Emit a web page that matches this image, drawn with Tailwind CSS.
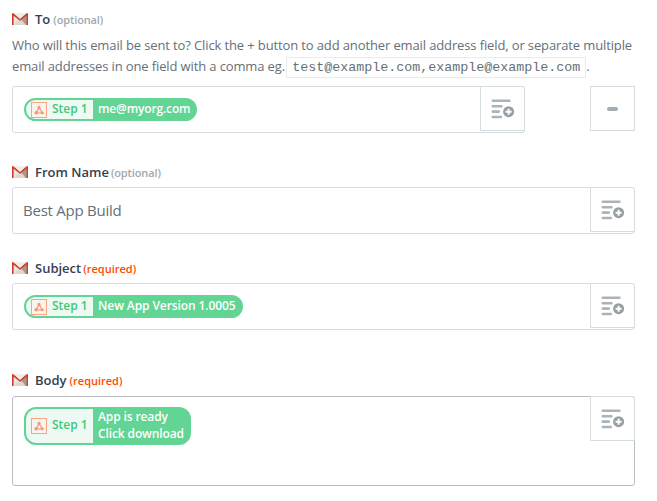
<!DOCTYPE html>
<html lang="en">
<head>
<meta charset="utf-8">
<title>Email action</title>
<script src="https://cdn.jsdelivr.net/npm/@tailwindcss/browser@4"></script>
</head>
<body class="bg-white font-['Open_Sans',sans-serif] text-[#666f78]">
<svg class="hidden">
  <symbol id="mail" viewBox="0 0 16 12">
    <rect x="0.5" y="0.5" width="15" height="11" fill="#e9e5d8"/>
    <path d="M8 7 14.5 1.5V12H12z" fill="#a39e94"/>
    <path d="M2 12 6.3 6.9 8 8l1.7-1.1 4 5.1z" fill="#dedacb"/>
    <path d="M2.5 .5h11L8 5.5z" fill="#f1eee5"/>
    <path d="M0 .7Q0 0 1 0L8 5.9 15 0q1 0 1 .7V12h-1.6V2.7L8 7.8 1.6 2.7V12H0z" fill="#cf3a30"/>
  </symbol>
  <symbol id="insert" viewBox="0 0 24 20">
    <g stroke="#aab3b8" stroke-width="2.6" stroke-linecap="round"><path d="M1.8 1.8h16.6M1.8 7.2h8.6M1.8 12.6h6M1.8 18h8"/></g>
    <circle cx="17.6" cy="12.7" r="5.5" fill="#959fa4"/>
    <path d="M17.6 9.7v6M14.6 12.7h6" stroke="#fff" stroke-width="1.9"/>
  </symbol>
  <symbol id="hook" viewBox="0 0 16 16">
    <rect x=".5" y=".5" width="15" height="15" fill="#f8f3ec" stroke="#f7a585"/>
    <g fill="none" stroke="#f79472" stroke-width="1.2"><path d="M8 5.2 5.6 10.4M8 5.2l2.6 4.6M5.2 11h6.2"/></g>
    <g fill="#f79472"><circle cx="8" cy="5.2" r="1.5"/><circle cx="5.1" cy="10.7" r="1.7"/><circle cx="11.2" cy="10.7" r="1.5"/></g>
  </symbol>
</svg>
<main class="flow-root h-[501px] w-[657px] overflow-hidden pl-3">
  <section class="mt-[9px] w-[623px]">
    <header class="flex h-5 items-center"><svg class="h-3 w-4"><use href="#mail"/></svg><h2 class="ml-[7px] text-[13px] leading-5 font-semibold text-[#354052]">To</h2><span class="ml-[3px] pt-px text-[11px] leading-5 font-semibold tracking-[-0.12px] text-[#a1a8ae]">(optional)</span></header>
    <p class="mt-[6px] w-[640px] text-[13px] leading-[21px] tracking-[-0.124px] whitespace-nowrap">Who will this email be sent to? Click the + button to add another email address field, or separate multiple<br>email addresses in one field with a comma eg. <code class="ml-[-2px] border border-[#e8eaeb] px-[5px] py-[2px] font-['Liberation_Mono',monospace] text-[13.33px] tracking-normal">test@example.com,example@example.com</code><span>.</span></p>
    <div class="mt-[8px] flex items-start justify-between">
      <div class="flex h-[47px] w-[513px] items-start justify-between rounded-[3px] border border-[#d5dce0] pl-[11px]">
        <div class="mt-[11px] flex rounded-[12px] border-2 border-[#62d493] bg-[#62d493] text-[12px] leading-[17px] font-semibold">
          <span class="flex w-[67px] items-center rounded-l-[10px] bg-[#eef9f4] pl-[5px] text-[#3fc878]"><svg class="mr-[5px] size-4"><use href="#hook"/></svg><span class="pb-[2px]">Step 1</span></span>
          <span class="px-[5px] pb-[2px] tracking-[-0.15px] text-white">me@myorg.com</span>
        </div>
        <button class="-mt-px -mr-px flex size-[45px] items-center justify-center rounded-tr-[3px] border border-[#d5dce0] bg-white"><svg class="h-5 w-6"><use href="#insert"/></svg></button>
      </div>
      <button class="flex size-[45px] items-center justify-center border border-[#d5dce0]"><span class="h-1 w-[11px] rounded-full bg-[#a4adb1]"></span></button>
    </div>
  </section>
  <section class="mt-[29px] w-[623px]">
    <header class="flex h-5 items-center"><svg class="h-3 w-4"><use href="#mail"/></svg><h2 class="ml-[7px] text-[13px] leading-5 font-semibold text-[#354052]">From Name</h2><span class="ml-[2px] pt-px text-[11px] leading-5 font-semibold tracking-[-0.12px] text-[#a1a8ae]">(optional)</span></header>
    <div class="mt-[5px] flex h-[47px] items-start justify-between rounded-[3px] border border-[#d5dce0] pl-[10px]">
      <span class="text-[15px] leading-[45px] tracking-[-0.24px]">Best App Build</span>
      <button class="-mt-px -mr-px flex size-[45px] items-center justify-center rounded-tr-[3px] border border-[#d5dce0] bg-white"><svg class="h-5 w-6"><use href="#insert"/></svg></button>
    </div>
  </section>
  <section class="mt-[24px] w-[623px]">
    <header class="flex h-5 items-center"><svg class="h-3 w-4"><use href="#mail"/></svg><h2 class="ml-[7px] text-[13px] leading-5 font-semibold text-[#354052]">Subject</h2><span class="ml-[2px] pt-px text-[11px] leading-5 font-semibold text-[#ff4a00]">(required)</span></header>
    <div class="mt-[5px] flex h-[47px] items-start justify-between rounded-[3px] border border-[#d5dce0] pl-[11px]">
      <div class="mt-[11px] flex rounded-[12px] border-2 border-[#62d493] bg-[#62d493] text-[12px] leading-[17px] font-semibold">
        <span class="flex w-[67px] items-center rounded-l-[10px] bg-[#eef9f4] pl-[5px] text-[#3fc878]"><svg class="mr-[5px] size-4"><use href="#hook"/></svg><span class="pb-[2px]">Step 1</span></span>
        <span class="px-[5px] pb-[2px] tracking-[-0.09px] text-white">New App Version 1.0005</span>
      </div>
      <button class="-mt-px -mr-px flex size-[45px] items-center justify-center rounded-tr-[3px] border border-[#d5dce0] bg-white"><svg class="h-5 w-6"><use href="#insert"/></svg></button>
    </div>
  </section>
  <section class="mt-[40px] w-[623px]">
    <header class="flex h-5 items-center"><svg class="h-3 w-4"><use href="#mail"/></svg><h2 class="ml-[7px] text-[13px] leading-5 font-semibold text-[#354052]">Body</h2><span class="ml-[3px] pt-px text-[11px] leading-5 font-semibold text-[#ff4a00]">(required)</span></header>
    <div class="mt-[6px] flex h-[90px] items-start justify-between rounded-[3px] border border-[#babec1] pl-[11px]">
      <div class="mt-[10px] flex rounded-[12px] border-2 border-[#62d493] bg-[#62d493] text-[12px] leading-[17px] font-semibold">
        <span class="flex w-[67px] items-center rounded-l-[10px] bg-[#eef9f4] pl-[5px] text-[#3fc878]"><svg class="mr-[5px] size-4"><use href="#hook"/></svg><span class="pb-[3px]">Step 1</span></span>
        <span class="-mt-px mb-px px-[5px] tracking-[-0.12px] text-white">App is ready<br>Click download</span>
      </div>
      <button class="-mt-px -mr-px flex size-[45px] items-center justify-center rounded-tr-[3px] border border-[#d5dce0] bg-white"><svg class="h-5 w-6"><use href="#insert"/></svg></button>
    </div>
  </section>
</main>
</body>
</html>
